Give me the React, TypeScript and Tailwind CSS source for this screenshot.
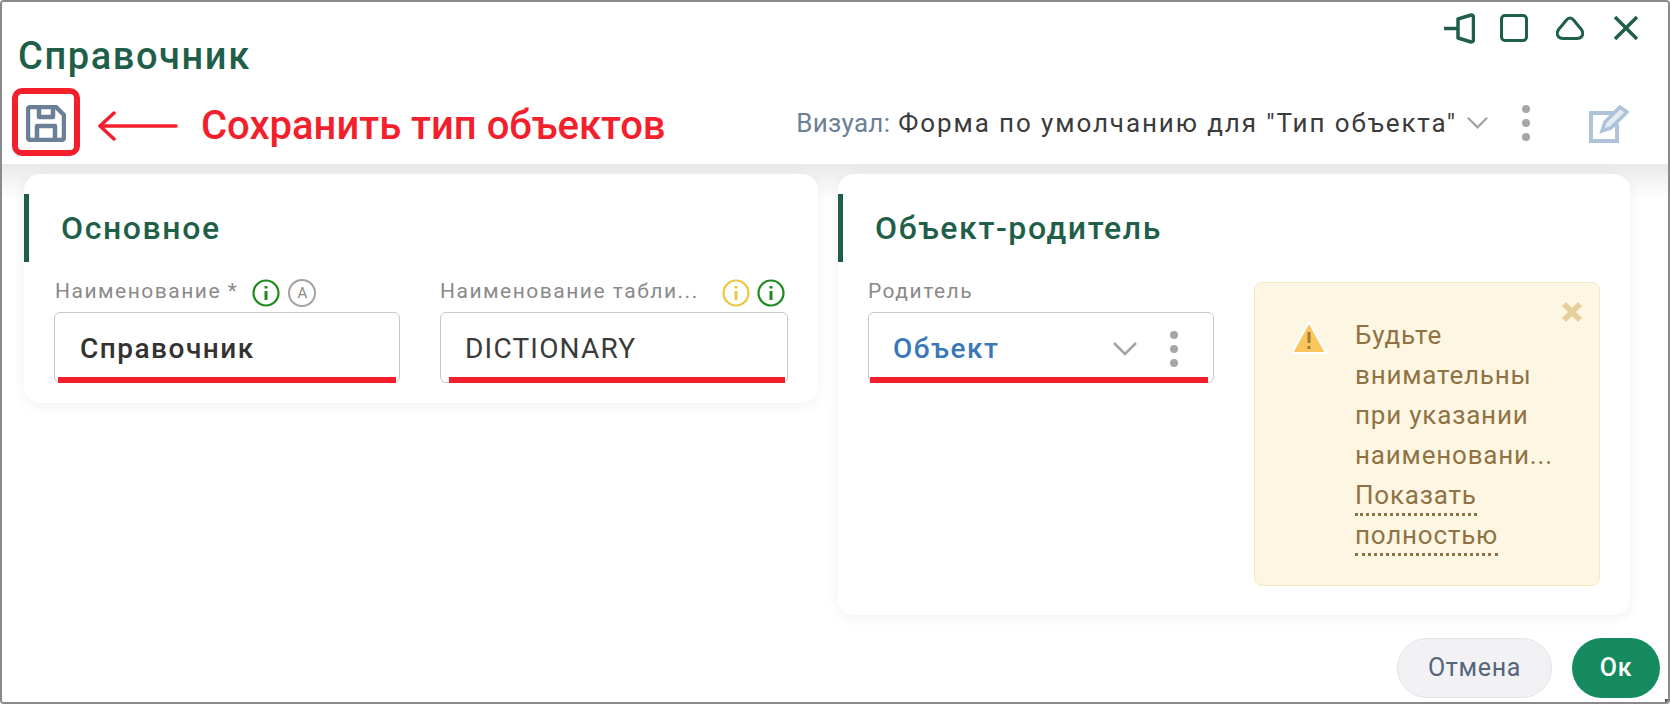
function InfoIcon({ color }: { color: string }) {
    return (
        <svg width="28" height="28" viewBox="0 0 28 28" fill="none" stroke={color}>
            <circle cx="14" cy="14" r="12.5" strokeWidth="2.2" />
            <path d="M14 12v9" strokeWidth="3" />
            <path d="M14 7v2.5" strokeWidth="3" />
        </svg>
    );
}

function AutoIcon() {
    return (
        <div className="w-[28px] h-[28px] rounded-full border-2 border-[#a3a3a3] flex items-center justify-center text-[15px] tracking-normal text-[#8a8a8a]">
            A
        </div>
    );
}

function Dots({ color }: { color: string }) {
    return (
        <svg width="10" height="36" viewBox="0 0 10 36" fill={color}>
            <circle cx="5" cy="4" r="4" />
            <circle cx="5" cy="18" r="4" />
            <circle cx="5" cy="32" r="4" />
        </svg>
    );
}

function Chevron({ width }: { width: number }) {
    return (
        <svg width={width} height="14" viewBox="0 0 24 14" fill="none" stroke="#a3a3a3" strokeWidth="2.5">
            <path d="M1 1l11 11L23 1" />
        </svg>
    );
}

function Field({ children, underlineClass }: { children: React.ReactNode; underlineClass: string }) {
    return (
        <div className="relative h-[71px] pt-[2px] rounded-md border border-[#c8c8c8] flex items-center">
            {children}
            <div className={`absolute -bottom-px h-[6px] bg-[#f41f2d] ${underlineClass}`} />
        </div>
    );
}

function SectionTitle({ title }: { title: string }) {
    return (
        <div className="h-[68px] mt-5 border-l-[5px] border-[#1f5f4a] pl-[32px] flex items-center text-[32px] font-medium tracking-[1.6px] text-[#1f5f4a]">
            {title}
        </div>
    );
}

export default function App() {
    return (
        <div className="w-[1670px] h-[704px] relative flex flex-col bg-white border-2 border-[#8a8a8a] rounded-[4px] overflow-hidden font-['Roboto',sans-serif]">
            <div className="h-[162px] shrink-0 bg-white">
                <div className="flex justify-end items-center pt-[8px] pr-[30px] h-[44px]">
                    <svg width="31" height="31" viewBox="0 0 31 31" fill="none" stroke="#1f5f4a" strokeWidth="3.500" strokeLinejoin="round">
                        <path d="M0 15.500h14M14 6l13-4q2.500 0 2.500 2.500v22q0 2.500-2.500 2.500L14 25z" />
                    </svg>
                    <div className="ml-[25px] w-[28px] h-[28px] rounded-[5px] border-[3px] border-[#1f5f4a]" />
                    <svg width="28" height="24" viewBox="0 0 28 24" fill="none" stroke="#1f5f4a" strokeWidth="3" strokeLinejoin="round" className="ml-[28px]">
                        <path d="M14 2Q12 2 10.500 4L3 13Q0 17 2 20Q3.500 22.500 7 22.500H21Q24.500 22.500 26 20Q28 17 25 13L17.500 4Q16 2 14 2z" />
                    </svg>
                    <svg width="24" height="24" viewBox="0 0 24 24" fill="none" stroke="#1f5f4a" strokeWidth="3.500" className="ml-[30px]">
                        <path d="M1 1l22 22M23 1L1 23" />
                    </svg>
                </div>
                <div className="pl-[16px] -mt-[10px] text-[38px] font-medium tracking-[1.6px] leading-[40px] text-[#1f5f4a]">
                    Справочник
                </div>
                <div className="flex items-center pl-[24px] pr-[39px] mt-[22px] h-[50px]">
                    <svg width="40" height="37" viewBox="0 0 40 37" fill="none" stroke="#6b7f96" strokeWidth="4.500" strokeLinejoin="round">
                        <path d="M2 5q0-3 3-3h25l8 8v22q0 3-3 3H5q-3 0-3-3z" />
                        <path d="M13 3v9h14V3M11 34V21h18v13" />
                    </svg>
                    <div className="ml-auto flex items-center text-[26px] leading-none">
                        <span className="tracking-[0.3px] text-[#6b7f96]">Визуал:</span>
                        <span className="ml-[8px] tracking-[1.9px] text-[#3b3b3b]">Форма по умолчанию для "Тип объекта"</span>
                        <div className="ml-[10px]">
                            <Chevron width={21} />
                        </div>
                        <div className="ml-[33px] mr-[58px]">
                            <Dots color="#a6a6a6" />
                        </div>
                        <svg width="40" height="39" viewBox="0 0 40 39" fill="none" stroke="#aec2d8" strokeWidth="4">
                            <path d="M26 9H2v28h26V20" />
                            <path d="M13 27l3-9L31 3l7 5-16 16z" fill="#e3eaf2" strokeWidth="3.500" />
                        </svg>
                    </div>
                </div>
            </div>

            <div className="flex-1 flex items-start gap-[20px] pl-[22px] pr-[38px] bg-[linear-gradient(#e8e8e8_0,#f0f0f0_10px,#ffffff_36px)]">
                <div className="w-[794px] h-[229px] mt-[10px] shrink-0 rounded-[16px] bg-white shadow-[0_3px_14px_rgba(0,0,0,0.06)]">
                    <SectionTitle title="Основное" />
                    <div className="flex gap-[40px] pl-[30px] pr-[30px] mt-[12px]">
                        <div className="w-[346px]">
                            <div className="h-[38px] flex items-center text-[21px] tracking-[1.5px] text-[#8a8a8a]">
                                <span className="mr-[14px] ml-[1px] pb-[3px]">Наименование *</span>
                                <InfoIcon color="#1e8a1e" />
                                <div className="ml-[8px]">
                                    <AutoIcon />
                                </div>
                            </div>
                            <Field underlineClass="left-[3px] right-[3px]">
                                <span className="pl-[25px] text-[28px] tracking-[1.5px] font-medium text-[#333333]">Справочник</span>
                            </Field>
                        </div>
                        <div className="w-[348px]">
                            <div className="h-[38px] flex items-center text-[21px] tracking-[1.5px] text-[#8a8a8a]">
                                <span className="mr-auto pb-[3px]">Наименование табли...</span>
                                <InfoIcon color="#e8c840" />
                                <div className="ml-[7px] mr-[3px]">
                                    <InfoIcon color="#1e8a1e" />
                                </div>
                            </div>
                            <Field underlineClass="left-[8px] right-[2px]">
                                <span className="pl-[24px] text-[28px] tracking-[1.2px] text-[#3b3b3b]">DICTIONARY</span>
                            </Field>
                        </div>
                    </div>
                </div>

                <div className="w-[792px] h-[441px] mt-[10px] shrink-0 rounded-[16px] bg-white shadow-[0_3px_14px_rgba(0,0,0,0.06)]">
                    <SectionTitle title="Объект-родитель" />
                    <div className="flex pl-[30px] pr-[30px] mt-[12px]">
                        <div className="w-[346px]">
                            <div className="h-[38px] flex items-center text-[21px] tracking-[1.5px] text-[#8a8a8a]">
                                <span className="pb-[3px]">Родитель</span>
                            </div>
                            <Field underlineClass="left-[1px] right-[5px]">
                                <span className="pl-[24px] text-[28px] tracking-[1.5px] font-medium text-[#3a78b8]">Объект</span>
                                <div className="ml-auto mr-[32px]">
                                    <Chevron width={24} />
                                </div>
                                <div className="mr-[34px]">
                                    <Dots color="#a6a6a6" />
                                </div>
                            </Field>
                        </div>
                        <div className="relative ml-[40px] w-[346px] h-[304px] mt-[8px] rounded-lg border border-[#f7e8c4] bg-[#fdf6e3] flex text-[#8f7344]">
                            <svg width="36" height="36" viewBox="0 0 36 36" className="mt-[37px] ml-[36px] shrink-0">
                                <path d="M18 2L35 33H1z" fill="#fcc65f" stroke="#ffffff" strokeWidth="2" strokeLinejoin="round" />
                                <path d="M18 12v11M18 26v3" stroke="#a07a3a" strokeWidth="3" />
                            </svg>
                            <div className="ml-[28px] mt-[32px] w-[220px] text-[26px] tracking-[0.8px] leading-[40px]">
                                <div>Будьте</div>
                                <div>внимательны</div>
                                <div>при указании</div>
                                <div>наименовани...</div>
                                <div>
                                    <span className="border-b-[3px] border-dotted border-[#8f7344] pb-[3px]">Показать</span>
                                </div>
                                <div>
                                    <span className="border-b-[3px] border-dotted border-[#8f7344] pb-[3px]">полностью</span>
                                </div>
                            </div>
                            <svg width="20" height="20" viewBox="0 0 20 20" fill="none" stroke="#e8cf9a" strokeWidth="5.500" className="absolute right-[17px] top-[19px]">
                                <path d="M2 2l16 16M18 2L2 18" />
                            </svg>
                        </div>
                    </div>
                </div>
            </div>

            <div className="h-[74px] shrink-0 flex items-center justify-end gap-[20px] pr-[8px] pt-[6px] bg-white">
                <button className="w-[155px] h-[60px] rounded-full border border-[#e2e4e8] bg-[#f2f2f4] text-[25px] tracking-[0.7px] text-[#56657a]">
                    Отмена
                </button>
                <button className="w-[88px] h-[60px] rounded-full bg-[#158a5e] text-[25px] tracking-[0.7px] font-medium text-white">
                    Ок
                </button>
            </div>

            <div className="absolute right-0 bottom-0 w-[3px] h-[3px] bg-[#555555]" />

            {/* red annotation */}
            <div className="absolute left-[10px] top-[86px] w-[68px] h-[68px] rounded-[10px] border-[6px] border-[#f41f2d]" />
            <svg width="80" height="30" viewBox="0 0 80 30" fill="none" stroke="#f41f2d" strokeWidth="3.500" strokeLinecap="round" className="absolute left-[96px] top-[109px]">
                <path d="M2 15h76M16 2L2 15l14 13" />
            </svg>
            <div className="absolute left-[199px] top-[102px] text-[40px] leading-[44px] font-medium text-[#f41f2d]">
                Сохранить тип объектов
            </div>
        </div>
    );
}
